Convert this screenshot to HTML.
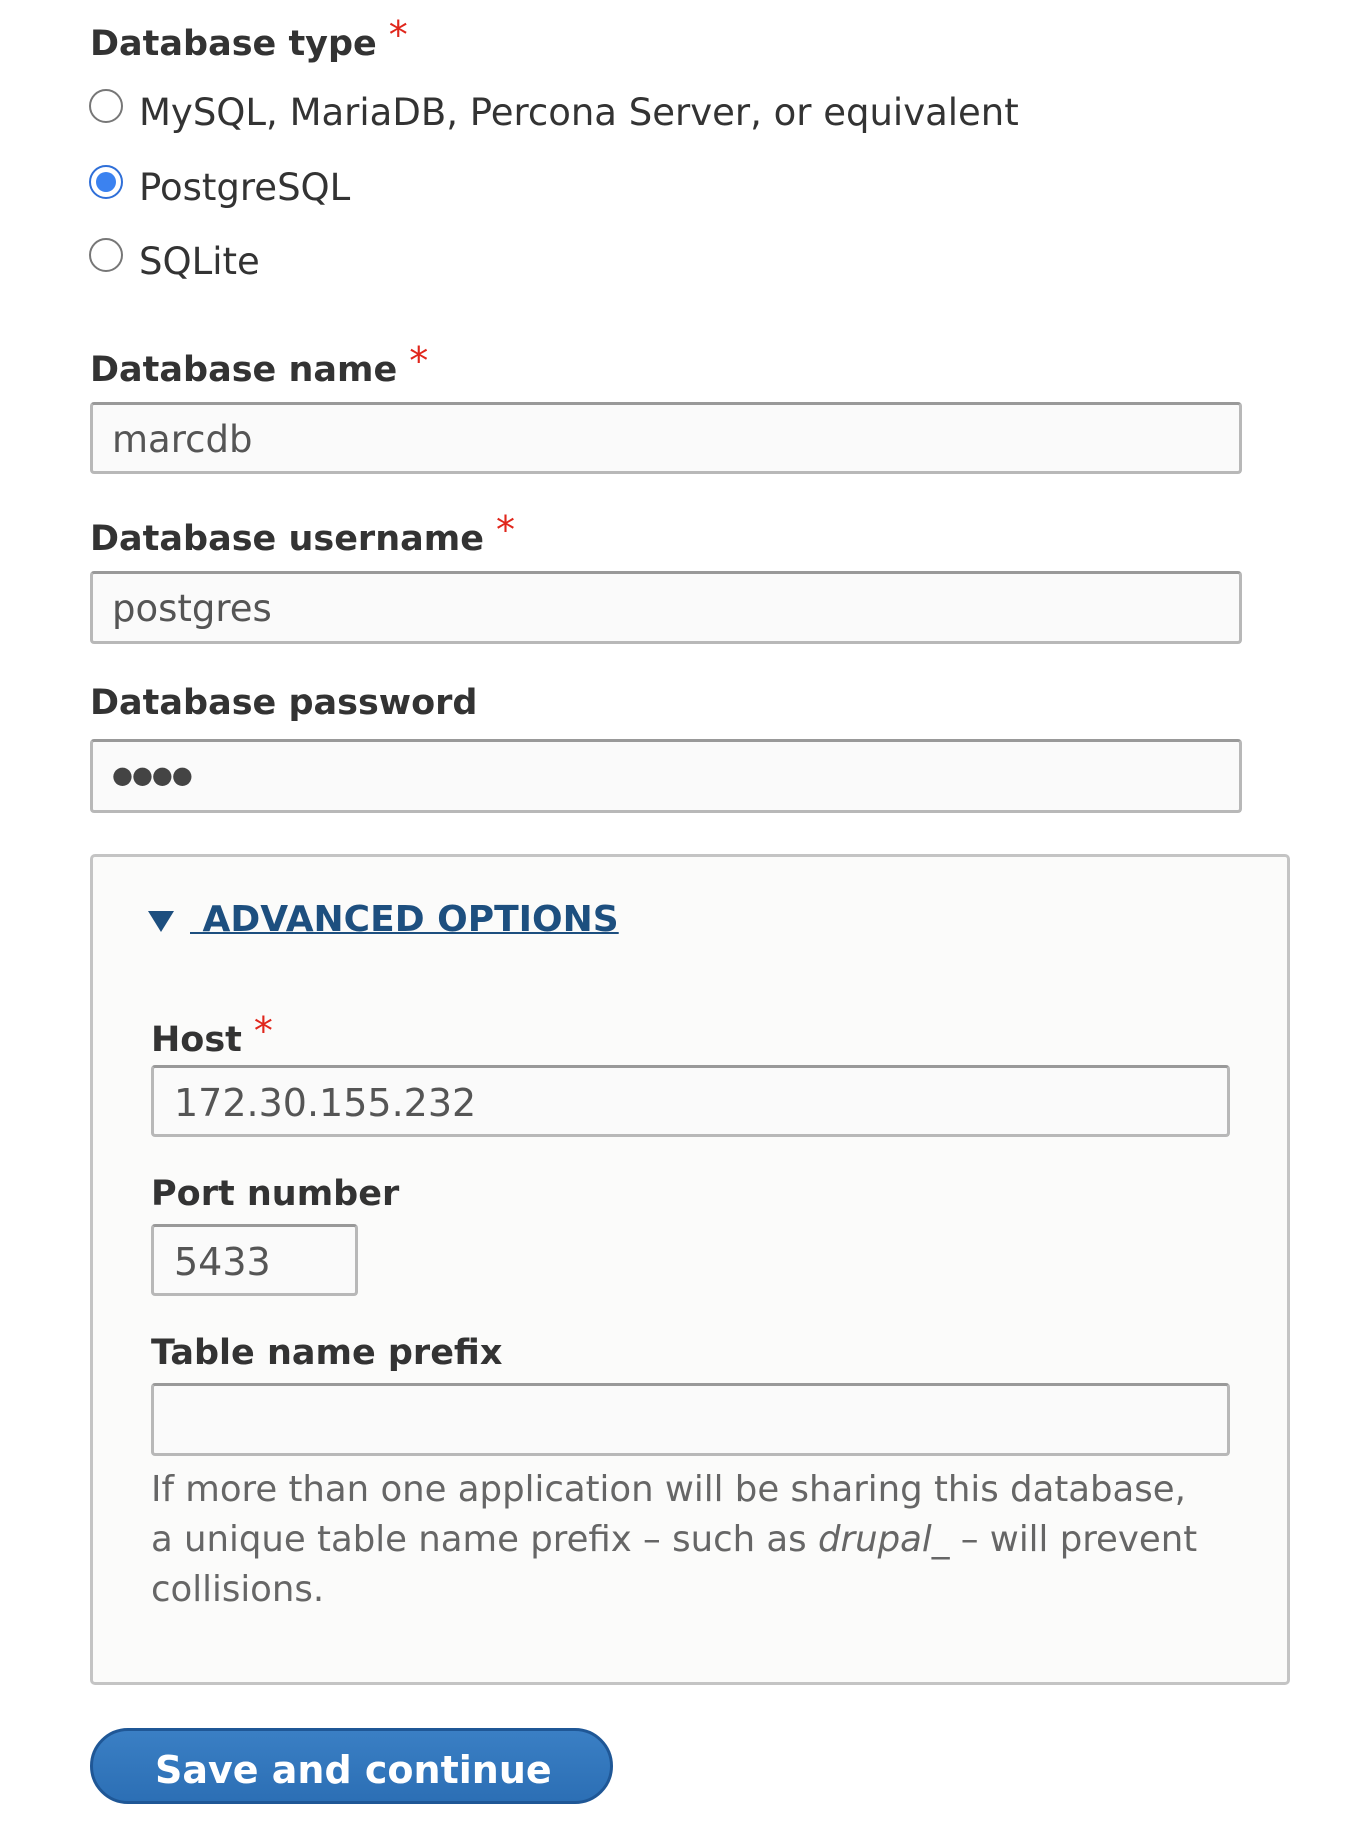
<!DOCTYPE html>
<html><head><meta charset="utf-8"><style>
body{margin:0;width:1354px;height:1822px;background:#fff;position:relative;font-family:"DejaVu Sans","Liberation Sans",sans-serif;overflow:hidden}
.a{position:absolute;line-height:1;white-space:nowrap}
.lbl{font-weight:bold;font-size:35px;color:#333}
.req{color:#e0261b;font-weight:normal;font-size:38px;margin-left:12px;position:relative;top:-7px}
.opt{font-size:37px;color:#333}
.radio{position:absolute;width:34px;height:34px;border:2px solid #777;border-radius:50%;box-sizing:border-box;background:#fff}
.inp{position:absolute;box-sizing:border-box;border:3px solid #b8b8b8;border-top-color:#999;border-radius:4px;background:#fafafa}
.val{font-size:37px;color:#555}
.desc{font-size:35.5px;color:#666}
</style></head><body>
<div class="a lbl" style="left:90px;top:23px">Database type<span class="req">*</span></div>
<div class="radio" style="left:89px;top:89px"></div>
<div class="a opt" style="left:139px;top:94px">MySQL, MariaDB, Percona Server, or equivalent</div>
<div class="radio" style="left:89px;top:165px;border:2px solid #2f6fd8;background:#fff"><div style="position:absolute;left:5px;top:5px;width:20px;height:20px;border-radius:50%;background:#3b82f0"></div></div>
<div class="a opt" style="left:139px;top:169px">PostgreSQL</div>
<div class="radio" style="left:89px;top:238px"></div>
<div class="a opt" style="left:139px;top:243px">SQLite</div>

<div class="a lbl" style="left:90px;top:349px">Database name<span class="req">*</span></div>
<div class="inp" style="left:90px;top:402px;width:1152px;height:72px"></div>
<div class="a val" style="left:112px;top:421px">marcdb</div>

<div class="a lbl" style="left:90px;top:518px">Database username<span class="req">*</span></div>
<div class="inp" style="left:90px;top:571px;width:1152px;height:73px"></div>
<div class="a val" style="left:112px;top:590px">postgres</div>

<div class="a lbl" style="left:90px;top:686px">Database password</div>
<div class="inp" style="left:90px;top:739px;width:1152px;height:74px"></div>
<div class="a val" style="left:112px;top:763px;font-size:24px;color:#444;letter-spacing:-1px">●●●●</div>

<div style="position:absolute;left:90px;top:854px;width:1200px;height:831px;box-sizing:border-box;border:3px solid #c4c4c4;border-radius:5px;background:#fbfbfa"></div>
<div class="a" style="left:148px;top:911px;width:0;height:0;border-left:13px solid transparent;border-right:13px solid transparent;border-top:21px solid #1d4f7f"></div>
<div class="a" style="left:190px;top:902px;font-size:36px;font-weight:bold;color:#1d4f7f;text-decoration:underline;text-decoration-thickness:2px">&nbsp;ADVANCED OPTIONS</div>

<div class="a lbl" style="left:151px;top:1019px">Host<span class="req">*</span></div>
<div class="inp" style="left:151px;top:1065px;width:1079px;height:72px"></div>
<div class="a val" style="left:174px;top:1084px;font-size:38px">172.30.155.232</div>

<div class="a lbl" style="left:151px;top:1177px">Port number</div>
<div class="inp" style="left:151px;top:1224px;width:207px;height:72px"></div>
<div class="a val" style="left:174px;top:1243px;font-size:38px">5433</div>

<div class="a lbl" style="left:151px;top:1336px">Table name prefix</div>
<div class="inp" style="left:151px;top:1383px;width:1079px;height:73px"></div>

<div class="a desc" style="left:151px;top:1472px">If more than one application will be sharing this database,</div>
<div class="a desc" style="left:151px;top:1522px">a unique table name prefix – such as <i>drupal_</i> – will prevent</div>
<div class="a desc" style="left:151px;top:1572px">collisions.</div>

<div style="position:absolute;left:90px;top:1728px;width:523px;height:76px;box-sizing:border-box;border:3px solid #1f5796;border-radius:38px;background:linear-gradient(#3a7fc4,#2c6fb5)"></div>
<div class="a" style="left:155px;top:1751px;font-size:38px;font-weight:bold;color:#fff">Save and continue</div>
</body></html>
